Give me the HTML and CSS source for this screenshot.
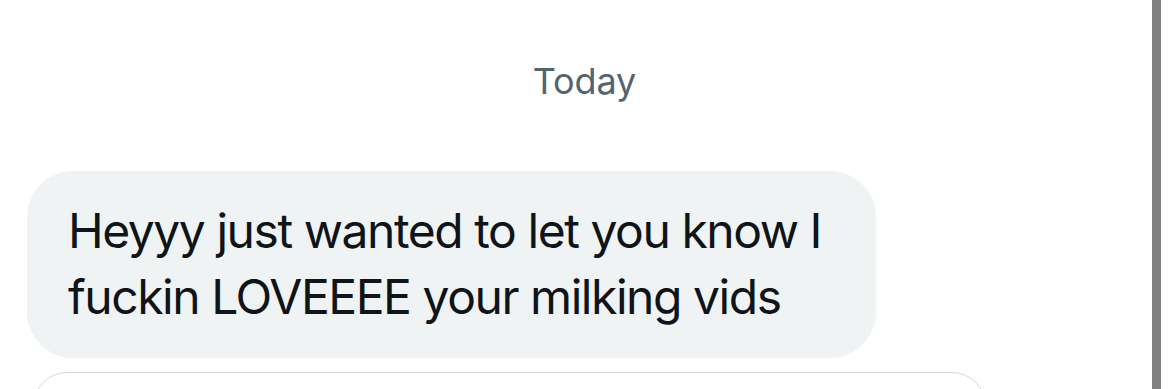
FILE: index.html
```html
<!DOCTYPE html>
<html>
<head>
<meta charset="utf-8">
<link rel="stylesheet" href="styles.css">
</head>
<body>
<div class="page">
  <div class="day">Today</div>
  <div class="row">
    <div class="bubble">Heyyy just wanted to let you know I<br>fuckin LOVEEEE your milking vids</div>
  </div>
  <div class="composer-clip">
    <div class="composer"></div>
  </div>
</div>
<div class="scrollbar"></div>
</body>
</html>
```
FILE: styles.css
```css
html, body {
  margin: 0;
  padding: 0;
  background: #ffffff;
  overflow: hidden;
}
body {
  width: 1169px;
  height: 389px;
  position: relative;
  font-family: Inter, "Noto Sans", sans-serif;
}
.page {
  display: flex;
  flex-direction: column;
  padding-top: 57px;
}
.day {
  text-align: center;
  color: #536471;
  font-size: 36px;
  line-height: 48px;
  letter-spacing: -0.1px;
}
.row {
  display: flex;
  padding-left: 27px;
  margin-top: 66px;
}
.bubble {
  box-sizing: border-box;
  width: 849px;
  height: 187px;
  background: #eff3f4;
  border-radius: 46px;
  padding: 27px 20px 0 41px;
  color: #0f1419;
  font-size: 48px;
  line-height: 66px;
  letter-spacing: -1.45px;
  white-space: nowrap;
}
.composer-clip {
  margin-left: 33px;
  margin-top: 14px;
  width: 953px;
  height: 17px;
  overflow: hidden;
}
.composer {
  box-sizing: border-box;
  width: 953px;
  height: 80px;
  border: 1px solid #cfd9de;
  border-radius: 34px;
}
.scrollbar {
  position: absolute;
  top: 0;
  right: 8px;
  width: 9px;
  height: 389px;
  background: #808080;
}
```
